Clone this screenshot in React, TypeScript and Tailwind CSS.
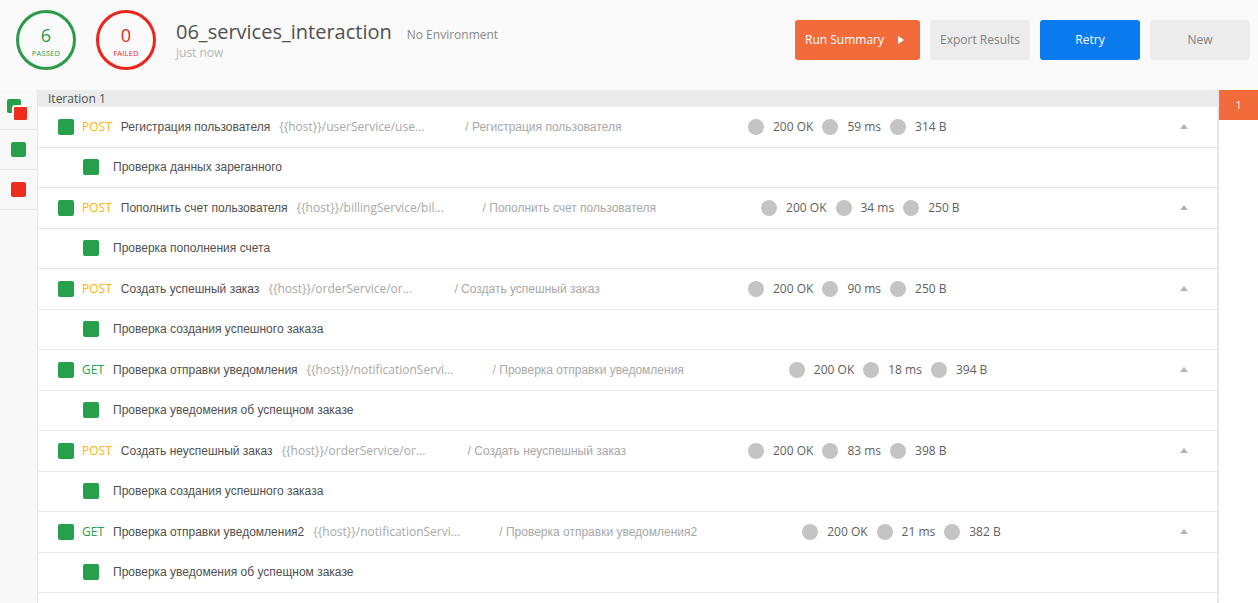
import { Fragment } from "react";

type Request = {
  method: "POST" | "GET";
  name: string;
  url: string;
  status: string;
  time: string;
  size: string;
  test: string;
};

const requests: Request[] = [
  {
    method: "POST",
    name: "Регистрация пользователя",
    url: "{{host}}/userService/use...",
    status: "200 OK",
    time: "59 ms",
    size: "314 B",
    test: "Проверка данных зареганного",
  },
  {
    method: "POST",
    name: "Пополнить счет пользователя",
    url: "{{host}}/billingService/bil...",
    status: "200 OK",
    time: "34 ms",
    size: "250 B",
    test: "Проверка пополнения счета",
  },
  {
    method: "POST",
    name: "Создать успешный заказ",
    url: "{{host}}/orderService/or...",
    status: "200 OK",
    time: "90 ms",
    size: "250 B",
    test: "Проверка создания успешного заказа",
  },
  {
    method: "GET",
    name: "Проверка отправки уведомления",
    url: "{{host}}/notificationServi...",
    status: "200 OK",
    time: "18 ms",
    size: "394 B",
    test: "Проверка уведомения об успещном заказе",
  },
  {
    method: "POST",
    name: "Создать неуспешный заказ",
    url: "{{host}}/orderService/or...",
    status: "200 OK",
    time: "83 ms",
    size: "398 B",
    test: "Проверка создания успешного заказа",
  },
  {
    method: "GET",
    name: "Проверка отправки уведомления2",
    url: "{{host}}/notificationServi...",
    status: "200 OK",
    time: "21 ms",
    size: "382 B",
    test: "Проверка уведомения об успещном заказе",
  },
];

// cyrillic falls back to an Arial-width face in the original
const cyr = { fontFamily: '"Liberation Sans", Arial, sans-serif' };

function Square({ color = "green" }: { color?: "green" | "red" }) {
  return (
    <span
      className={`inline-block w-[16px] h-[16px] rounded-[2px] shrink-0 ${
        color === "green" ? "bg-[#26a04a]" : "bg-[#ed2b1f]"
      }`}
    />
  );
}

function Dot() {
  return <span className="inline-block w-[16px] h-[16px] rounded-full bg-[#c4c4c4] shrink-0" />;
}

function CaretUp() {
  return (
    <svg width="8" height="5" viewBox="0 0 8 5" className="shrink-0">
      <path d="M4 0 L8 5 L0 5 Z" fill="#b4b4b4" />
    </svg>
  );
}

function CountCircle({
  value,
  label,
  tone,
}: {
  value: number;
  label: string;
  tone: "green" | "red";
}) {
  return (
    <div
      className={`w-[60px] h-[60px] rounded-full border-[3px] flex flex-col items-center justify-center ${
        tone === "green"
          ? "border-[#2c9a48] text-[#2c9a48]"
          : "border-[#e8261c] text-[#e8261c]"
      }`}
    >
      <span className="text-[18px] leading-[20px] mt-[2px]">{value}</span>
      <span className="text-[7.5px] leading-[10px] mt-[3px] tracking-[0.2px]">{label}</span>
    </div>
  );
}

function RequestRow({ r }: { r: Request }) {
  return (
    <div className="h-[40.5px] border-b border-[#e8e8e8] flex items-center pl-[20px] pr-[29px] text-[12px]">
      <div className="flex items-center min-w-[690px]">
        <Square />
        <span
          className={`ml-[8px] mr-[9px] ${
            r.method === "POST" ? "text-[#ffb400]" : "text-[#26a04a]"
          }`}
        >
          {r.method}
        </span>
        <span className="text-[#505050] mr-[9px] whitespace-nowrap" style={cyr}>
          {r.name}
        </span>
        <span className="text-[#a8a8a8] w-[186px] whitespace-nowrap overflow-hidden shrink-0">
          {r.url}
        </span>
        <span className="text-[#a8a8a8] whitespace-nowrap pr-[105px]" style={cyr}>
          / {r.name}
        </span>
      </div>
      <div className="flex items-center text-[#606060] whitespace-nowrap">
        <Dot />
        <span className="ml-[9px] mr-[9px]">{r.status}</span>
        <Dot />
        <span className="ml-[9px] mr-[9px]">{r.time}</span>
        <Dot />
        <span className="ml-[9px]">{r.size}</span>
      </div>
      <div className="ml-auto">
        <CaretUp />
      </div>
    </div>
  );
}

function TestRow({ text }: { text: string }) {
  return (
    <div className="h-[40.5px] border-b border-[#e8e8e8] flex items-center pl-[45px] text-[12px]">
      <Square />
      <span className="ml-[14px] text-[#505050]" style={cyr}>
        {text}
      </span>
    </div>
  );
}

export default function App() {
  return (
    <div
      className="w-full h-[603px] overflow-hidden bg-[#fafafa] flex flex-col"
      style={{ fontFamily: '"Open Sans", "Noto Sans", sans-serif' }}
    >
      <header className="h-[90px] shrink-0 flex items-start pt-[10px] pl-[16px] pr-[8px]">
        <CountCircle value={6} label="PASSED" tone="green" />
        <div className="ml-[20px]">
          <CountCircle value={0} label="FAILED" tone="red" />
        </div>
        <div className="ml-[20px] mt-[9px] flex flex-col">
          <div className="flex items-baseline">
            <span className="text-[20px] leading-[26px] text-[#505050]">06_services_interaction</span>
            <span className="ml-[15px] text-[12px] text-[#888888]">No Environment</span>
          </div>
          <span className="text-[12px] text-[#b4b4b4] leading-[16px]">just now</span>
        </div>
        <div className="ml-auto mt-[10px] flex items-center gap-[10px] text-[12px]">
          <button className="w-[125px] h-[40px] rounded-[3px] bg-[#f26b3a] text-white flex items-center pl-[10px]">
            <span>Run Summary</span>
            <svg width="6" height="8" viewBox="0 0 6 8" className="ml-[14px]">
              <path d="M0 0 L6 4 L0 8 Z" fill="#ffffff" />
            </svg>
          </button>
          <button className="w-[100px] h-[40px] rounded-[3px] bg-[#ececec] text-[#808080]">
            Export Results
          </button>
          <button className="w-[100px] h-[40px] rounded-[3px] bg-[#097bed] text-white">Retry</button>
          <button className="w-[100px] h-[40px] rounded-[3px] bg-[#ececec] text-[#808080]">New</button>
        </div>
      </header>

      <div className="flex flex-1 min-h-0">
        <aside className="w-[38px] shrink-0 bg-[#f8f8f8] border-r border-[#e6e6e6]">
          <div className="h-[40px] border-b border-[#e6e6e6] relative">
            <span className="absolute left-[7px] top-[9px] w-[14px] h-[14px] rounded-[2px] bg-[#26a04a]" />
            <span className="absolute left-[12px] top-[15px] w-[17px] h-[17px] rounded-[3px] bg-[#ed2b1f] border-[2px] border-[#f8f8f8]" />
          </div>
          <div className="h-[40px] border-b border-[#e6e6e6] flex items-center justify-center">
            <span className="w-[15px] h-[15px] rounded-[2px] bg-[#26a04a]" />
          </div>
          <div className="h-[40px] border-b border-[#e6e6e6] flex items-center justify-center">
            <span className="w-[15px] h-[15px] rounded-[2px] bg-[#ed2b1f]" />
          </div>
        </aside>

        <main className="flex-1 bg-white border-r-2 border-[#e8e8e8] min-w-0">
          <div className="h-[17px] bg-[#ebebeb] text-[12px] leading-[17px] text-[#505050] pl-[10px]">
            Iteration 1
          </div>
          {requests.map((r, i) => (
            <Fragment key={i}>
              <RequestRow r={r} />
              <TestRow text={r.test} />
            </Fragment>
          ))}
        </main>

        <aside className="w-[39px] shrink-0 bg-white">
          <div className="h-[30px] bg-[#f26b3a] text-white text-[10px] flex items-center justify-center">
            1
          </div>
        </aside>
      </div>
    </div>
  );
}
